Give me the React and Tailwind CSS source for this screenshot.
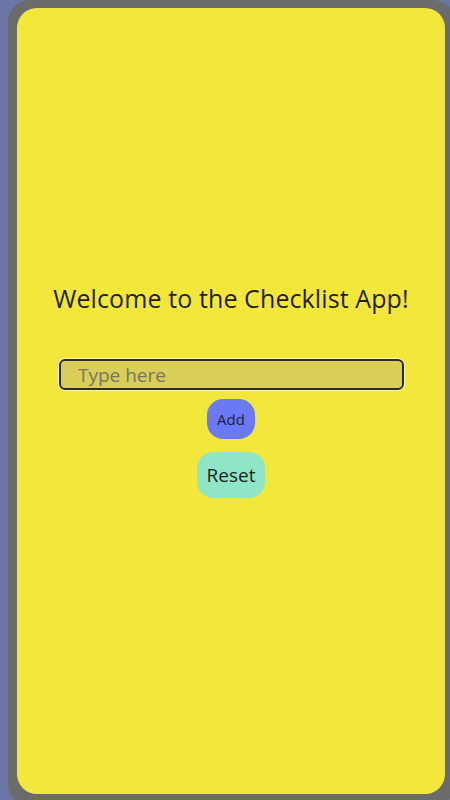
import React, { useState } from 'react';

export default function App() {
  const [texto, setTexto] = useState('');
  const [itens, setItens] = useState([]);

  return (
    <div className="w-[450px] h-[800px] overflow-hidden bg-[#6b76a6] font-['Open_Sans',sans-serif]">
      {/* moldura do celular */}
      <div className="ml-[8px] w-[447px] h-[806px] rounded-[22px] bg-[#6b6b6b] pt-[8px] pl-[9px] pr-[10px] pb-[12px]">
        <div className="h-full rounded-[20px] bg-[#f4e73b] flex flex-col items-center pt-[273px]">
          <h1 className="text-[25px] leading-[34px] text-[#1f1f1f] tracking-[0.1px]">Welcome to the Checklist App!</h1>

          <input
            value={texto}
            onChange={(e) => setTexto(e.target.value)}
            placeholder="Type here"
            className="mt-[44px] ml-[1px] w-[345px] h-[31px] rounded-[6px] border-2 border-[#2b2b2b] bg-[#d9ce58] px-[17px] text-[19px] text-[#333] placeholder:text-[#7a7560] outline-none shadow-[0_0_0_1px_rgba(255,255,255,0.6)]"
          />

          <button
            onClick={() => { if (texto) { setItens([...itens, texto]); setTexto(''); } }}
            className="mt-[9px] w-[48px] h-[40px] rounded-[16px] bg-[#6b79f7] text-[15px] text-[#1f1f3a]"
          >
            Add
          </button>

          <button
            onClick={() => setItens([])}
            className="mt-[13px] w-[68px] h-[46px] rounded-[16px] bg-[#8fe6c7] text-[19px] text-[#1f1f1f]"
          >
            Reset
          </button>
        </div>
      </div>
    </div>
  );
}
